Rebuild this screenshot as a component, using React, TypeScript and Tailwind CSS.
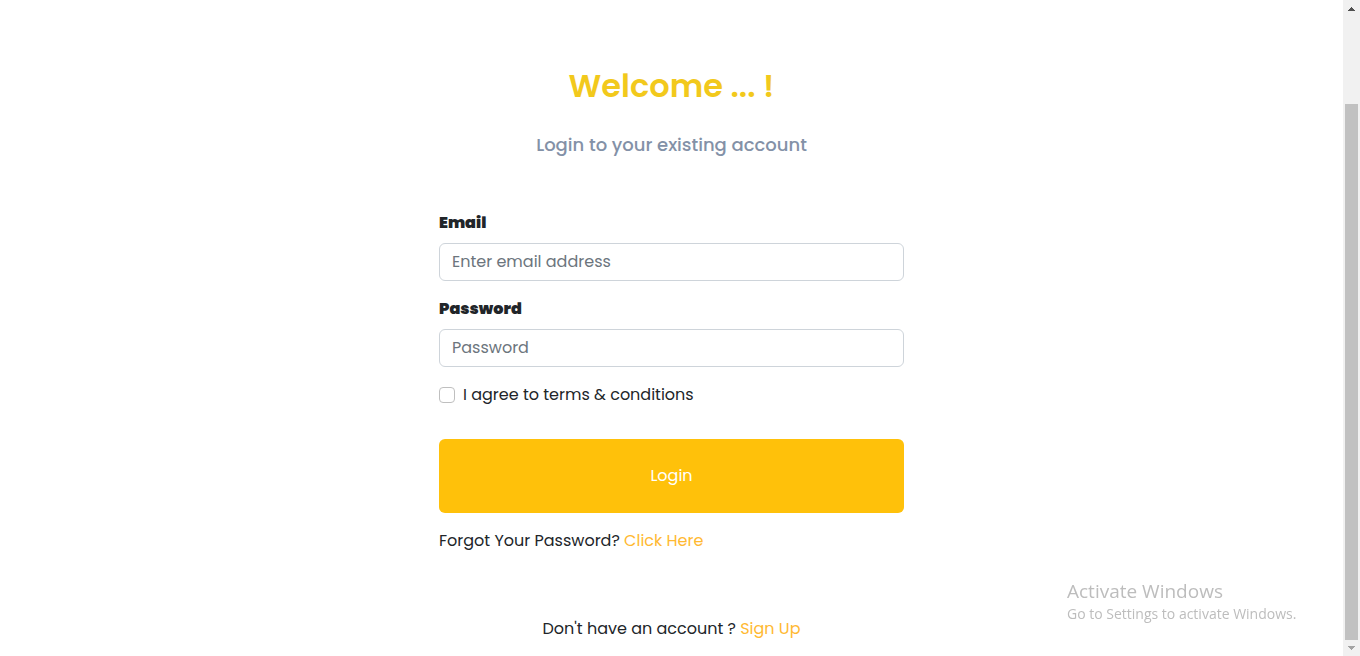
function ScrollRail() {
  return (
    <div aria-hidden="true" className="sticky top-0 flex h-screen w-[17px] shrink-0 flex-col items-center bg-[#f1f1f1]">
      <svg className="h-[17px] w-[17px] shrink-0" viewBox="0 0 17 17" shapeRendering="crispEdges">
        <path d="M8 7h1v1h1v1h1v1h1v1H5v-1h1V9h1V8h1z" fill="#505050" />
      </svg>
      <div className="flex w-[13px] flex-1 flex-col">
        <div className="grow-[87]" />
        <div className="grow-[536] bg-[#c1c1c1]" />
      </div>
      <svg className="h-4 w-[17px] shrink-0" viewBox="0 0 17 16" shapeRendering="crispEdges">
        <path d="M5 6h7v1h-1v1h-1v1H9v1H8V9H7V8H6V7H5z" fill="#a3a3a3" />
      </svg>
    </div>
  );
}

function Field({ id, label, type, placeholder }: { id: string; label: string; type: string; placeholder: string }) {
  return (
    <div className="mb-4 flex flex-col gap-2">
      <label htmlFor={id} className="font-black leading-6">
        {label}
      </label>
      <input
        id={id}
        type={type}
        placeholder={placeholder}
        className="w-full rounded-md border border-[#ced4da] bg-white px-3 py-1.5 leading-6 outline-none placeholder:text-[#6c757d] focus:border-[#ffc107]"
      />
    </div>
  );
}

export default function App() {
  return (
    <div className="flex min-h-screen bg-white font-['Poppins','Inter',sans-serif] text-base text-[#212529]">
      <main className="min-w-0 flex-1 px-3 pt-[66px] pb-4">
        <div className="mx-auto max-w-[465px]">
          <h1 className="text-center text-[32px] leading-10 font-semibold text-[#f2c91c]">Welcome ... !</h1>
          <h2 className="mt-[27px] text-center text-lg leading-6 font-medium text-[#8391a7]">
            Login to your existing account
          </h2>
          <form className="mt-[54px]" onSubmit={(e) => e.preventDefault()}>
            <Field id="email" label="Email" type="email" placeholder="Enter email address" />
            <Field id="password" label="Password" type="password" placeholder="Password" />
            <div className="flex items-center gap-2 leading-6">
              <input
                id="terms"
                type="checkbox"
                className="size-4 appearance-none rounded border border-[#bfbfbf] bg-white checked:border-[#ffc107] checked:bg-[#ffc107]"
              />
              <label htmlFor="terms">I agree to terms &amp; conditions</label>
            </div>
            <button
              type="submit"
              className="mt-8 w-full rounded-md bg-[#ffc10a] py-[25px] leading-6 text-white"
            >
              Login
            </button>
          </form>
          <p className="mt-4 leading-6">
            Forgot Your Password?{" "}
            <a href="#reset" className="text-[#ffb932]">
              Click Here
            </a>
          </p>
          <p className="mt-16 text-center leading-6">
            Don't have an account ?{" "}
            <a href="#signup" className="text-[#ffb932]">
              Sign Up
            </a>
          </p>
        </div>
      </main>
      <div className="pointer-events-none fixed right-[57px] bottom-8 w-[236px] font-['Segoe_UI','Open_Sans',sans-serif] text-[#bdbdbd]">
        <p className="text-[19px] leading-[26px]">Activate Windows</p>
        <p className="text-sm leading-5">Go to Settings to activate Windows.</p>
      </div>
      <ScrollRail />
    </div>
  );
}
